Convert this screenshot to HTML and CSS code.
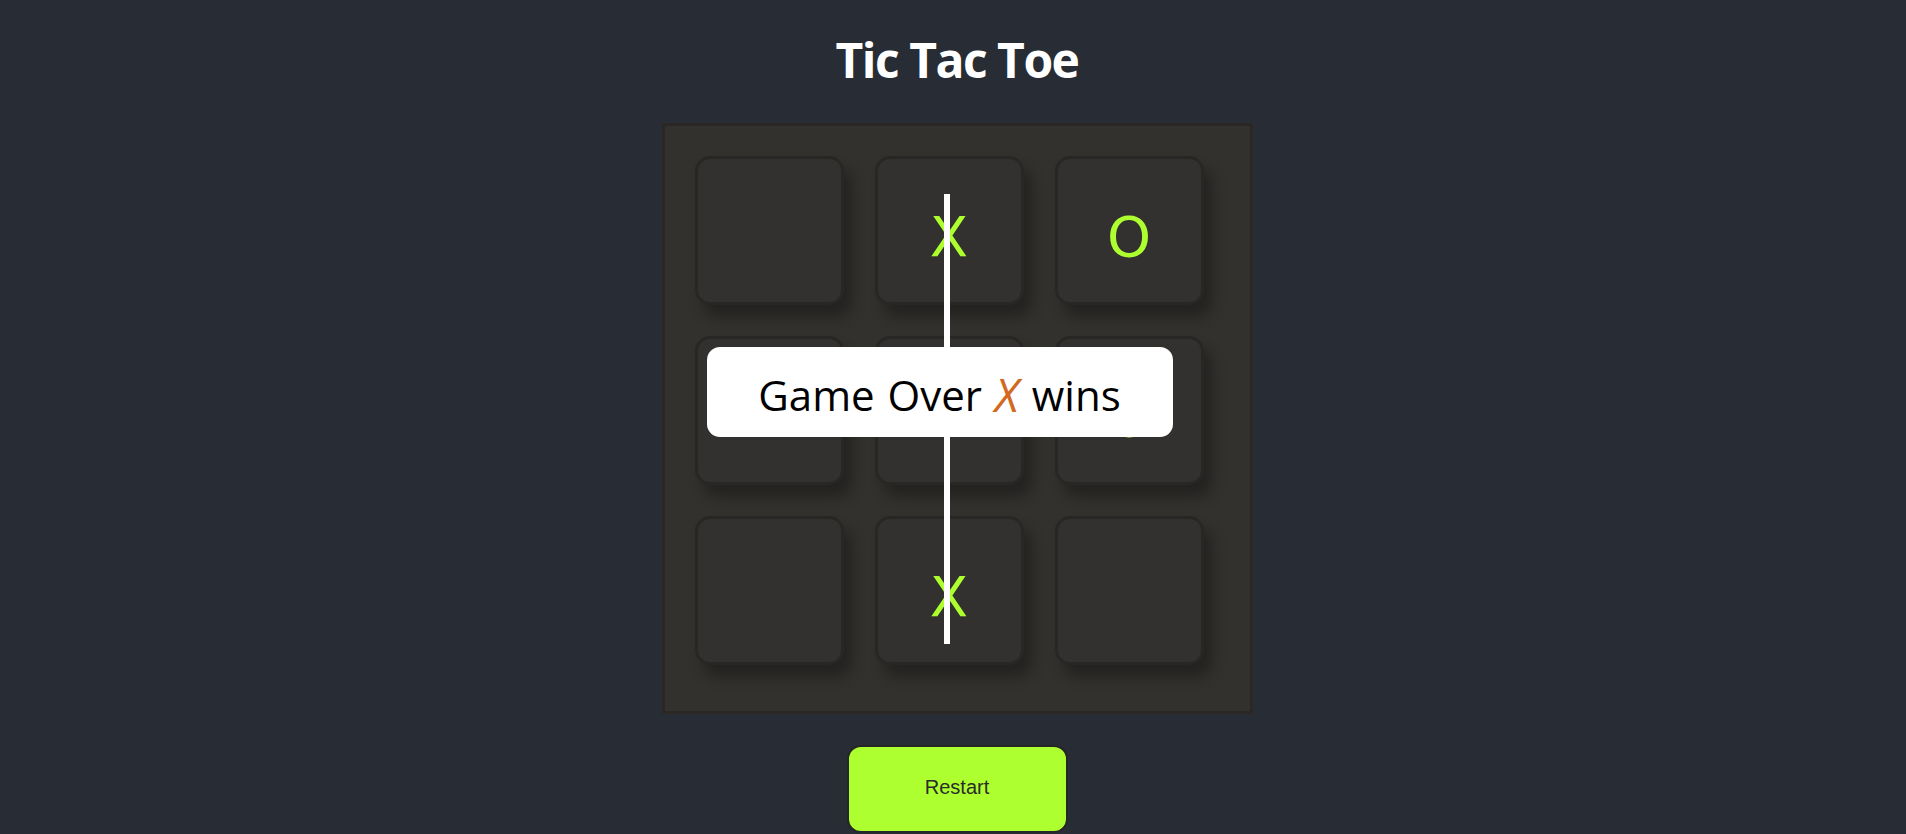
FILE: index.html
```html
<!DOCTYPE html>
<html lang="en">
<head>
<meta charset="utf-8">
<title>Tic Tac Toe</title>
<link rel="stylesheet" href="styles.css">
</head>
<body>
<main class="app">
  <h1 class="title">Tic Tac Toe</h1>
  <div class="board">
    <div class="grid">
      <div class="cell"></div>
      <div class="cell">X</div>
      <div class="cell">O</div>
      <div class="cell"></div>
      <div class="cell">X</div>
      <div class="cell">O</div>
      <div class="cell"></div>
      <div class="cell">X</div>
      <div class="cell"></div>
    </div>
    <div class="strike"></div>
    <div class="popup">Game Over <span class="winner">X</span> wins</div>
  </div>
  <button class="restart">Restart</button>
</main>
</body>
</html>
```
FILE: styles.css
```css
html, body {
  margin: 0;
  padding: 0;
}

body {
  background: #282c34;
  height: 834px;
  overflow: hidden;
}

.app {
  display: flex;
  flex-direction: column;
  align-items: center;
  padding-left: 8px;
  padding-top: 30px;
}

.title {
  margin: 0 0 33px;
  height: 60px;
  font-family: "Open Sans", "DejaVu Sans", sans-serif;
  font-weight: 700;
  font-size: 48px;
  line-height: 60px;
  color: #ffffff;
  letter-spacing: -1.5px;
}

.board {
  position: relative;
  box-sizing: border-box;
  width: 591px;
  height: 591px;
  padding: 30px 0 0 30px;
  background: #33312e;
  border: 3px solid #2a2725;
}

.grid {
  display: grid;
  grid-template-columns: repeat(3, 149px);
  grid-template-rows: repeat(3, 149px);
  gap: 31px;
}

.cell {
  box-sizing: border-box;
  display: flex;
  align-items: center;
  justify-content: center;
  padding-top: 11px;
  background: #33312f;
  border: 3px solid #292725;
  border-radius: 15px;
  box-shadow: 8px 12px 14px rgba(0, 0, 0, 0.3);
  font-family: "DejaVu Sans", sans-serif;
  font-size: 56px;
  color: #adff2f;
}

.strike {
  position: absolute;
  left: 279px;
  top: 68px;
  width: 6px;
  height: 450px;
  background: #ffffff;
}

.popup {
  position: absolute;
  left: 42px;
  top: 221px;
  box-sizing: border-box;
  width: 466px;
  height: 90px;
  display: flex;
  align-items: center;
  justify-content: center;
  padding-top: 4px;
  background: #ffffff;
  border-radius: 13px;
  font-family: "Open Sans", "DejaVu Sans", sans-serif;
  font-size: 42px;
  word-spacing: 2px;
  color: #000000;
  white-space: pre;
}

.winner {
  color: #d2691e;
  font-style: italic;
  font-size: 46px;
}

.restart {
  box-sizing: border-box;
  margin-top: 31px;
  width: 221px;
  height: 88px;
  padding: 0 0 3px;
  background: #adff2f;
  border: 2px solid #262626;
  border-radius: 14px;
  font-family: "Liberation Sans", Arial, sans-serif;
  font-size: 20px;
  color: #2b2b2b;
}
```
